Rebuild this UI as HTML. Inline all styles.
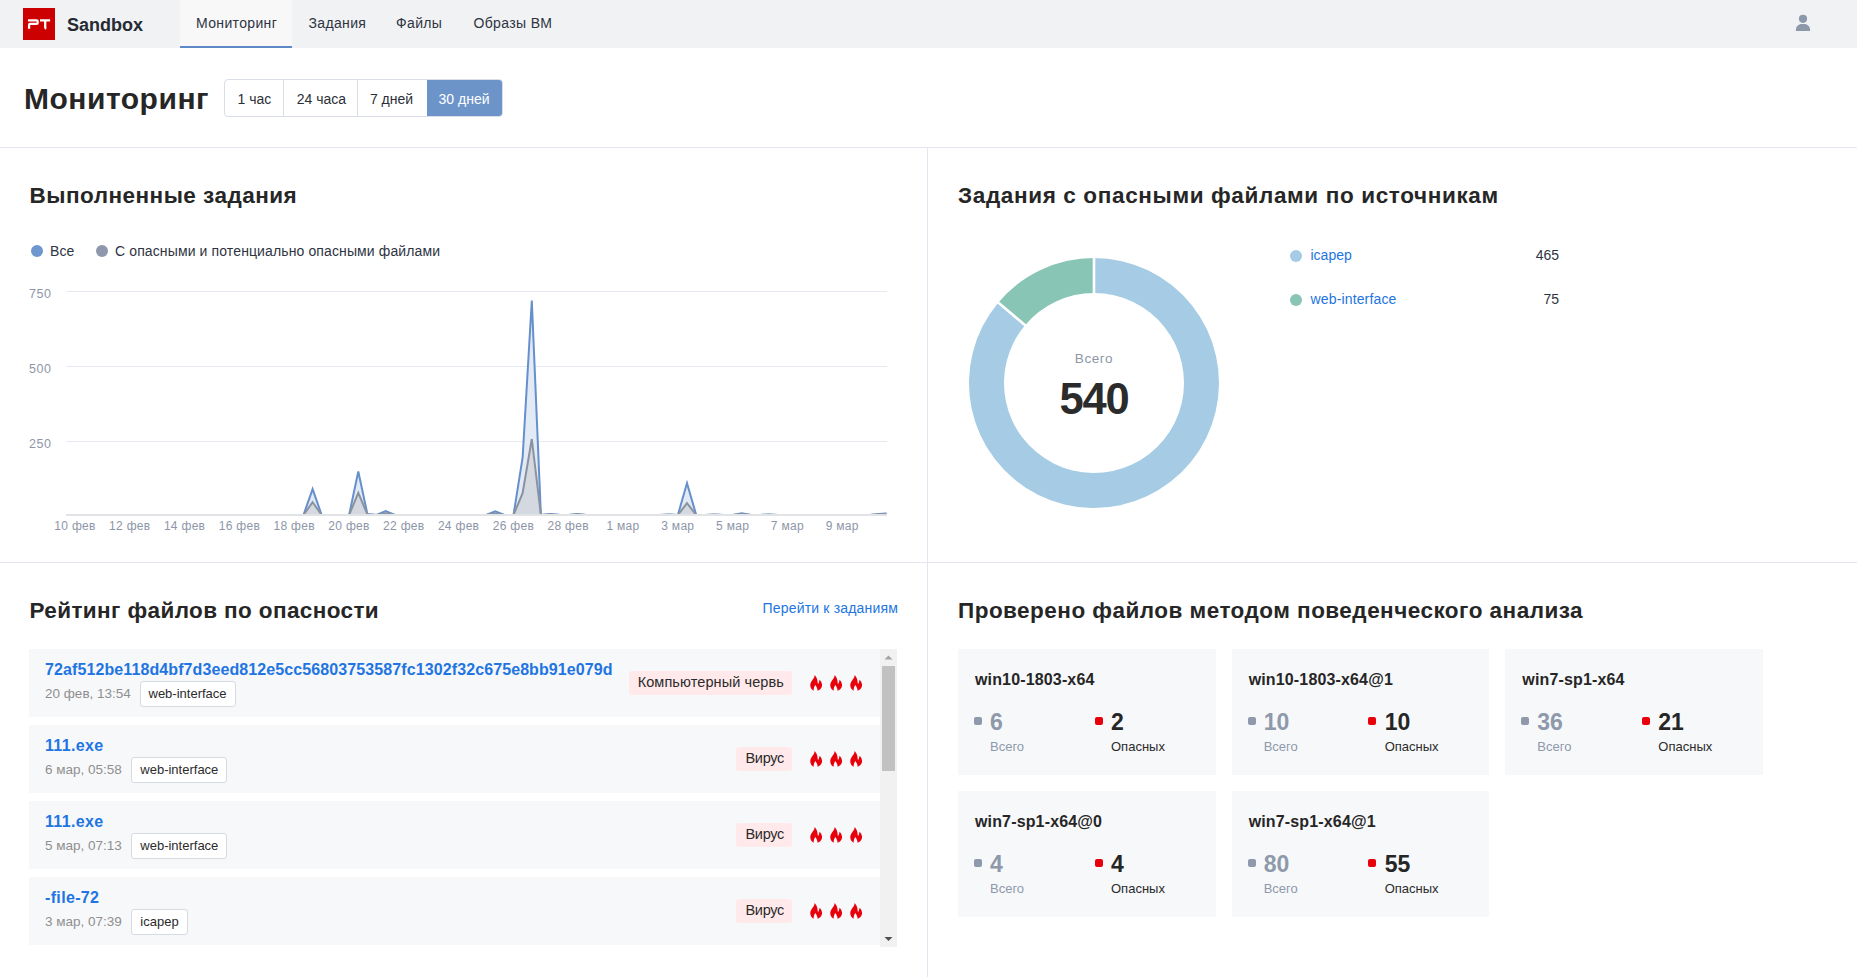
<!DOCTYPE html>
<html><head><meta charset="utf-8">
<style>
*{box-sizing:border-box;margin:0;padding:0}
html,body{width:1857px;height:977px;overflow:hidden;background:#fff}
body{position:relative;font-family:"Liberation Sans",sans-serif;color:#2b2b2b}
.a{position:absolute;white-space:nowrap;line-height:1}
.hdr{position:absolute;left:0;top:0;width:1857px;height:48px;background:#f1f2f4}
.logo{position:absolute;left:23px;top:8px;width:32px;height:32px;background:#cc0000}
.tab{position:absolute;top:0;height:48px}
.tab.act{background:#f8f8f9;border-bottom:2px solid #5f88c8}
.nav{font-size:14px;color:#2e3442;letter-spacing:0.35px}
.btns{position:absolute;left:224px;top:79px;width:278.5px;height:37.8px;border:1px solid #d8dde8;border-radius:4px;overflow:hidden;background:#fff}
.btn{position:absolute;top:0;height:36px;font-size:14px;line-height:39px;text-align:center;color:#2b2f38}
.bsep{position:absolute;top:0;width:1px;height:36px;background:#d8dde8}
.hline{position:absolute;left:0;width:1857px;height:1px;background:#e3e6ee}
.vline{position:absolute;left:927px;top:147px;width:1px;height:830px;background:#e3e6ee}
.h2{font-size:22.5px;font-weight:bold;color:#262626;letter-spacing:0.48px}

.abs{position:absolute}
.axl{font-size:12px;color:#8d96a8;letter-spacing:0.3px}
.lg{font-size:14px;color:#2e3442;letter-spacing:0.12px}
.dot{position:absolute;width:12px;height:12px;border-radius:50%}
.row{position:absolute;left:29px;width:851px;height:68px;background:#f7f8fa}
.fn{position:absolute;left:16px;font-size:16px;font-weight:bold;color:#2175e2;letter-spacing:0.1px;line-height:1;white-space:nowrap}
.dt{position:absolute;left:16px;font-size:13.5px;color:#8f8f8f;line-height:1;white-space:nowrap}
.tag{position:absolute;height:26px;border:1px solid #d6dae2;border-radius:3px;background:#fff;font-size:13px;line-height:23px;padding:0 8px;color:#2b2b2b;white-space:nowrap}
.bdg{position:absolute;right:88px;height:24px;background:#ffe9ea;border-radius:3px;font-size:14.5px;line-height:23px;padding:0 8px 0 9px;letter-spacing:0.1px;color:#2b2b2b;white-space:nowrap}
.fl{position:absolute;width:12.3px;height:15.7px}
.card{position:absolute;width:257.67px;height:126px;background:#f7f8fa}
.ct{position:absolute;left:17px;top:23px;font-size:16px;font-weight:bold;color:#262626;letter-spacing:0.15px;line-height:1;white-space:nowrap}
.sq{position:absolute;top:68px;width:8px;height:8px;border-radius:2px}
.num{position:absolute;top:62.3px;font-size:23px;font-weight:bold;line-height:1;white-space:nowrap}
.lbl{position:absolute;top:91px;font-size:13px;line-height:1;white-space:nowrap}
</style></head><body>
<div class="hdr">
  <div class="logo"><svg width="32" height="32" viewBox="0 0 32 32"><g fill="none" stroke="#fff" stroke-width="2.3" stroke-linecap="butt"><path d="M6.1 13.6V12.3H13.6Q14.7 12.3 14.7 13.4V14.8Q14.7 15.9 13.6 15.9H7.2Q6.1 15.9 6.1 17V20.7"/><path d="M17 12.3H27.1M22.2 12.3V19.3Q22.2 20.3 23.3 20.6"/></g></svg></div>
  <div class="a" style="left:67px;top:15.5px;font-size:18px;font-weight:bold;color:#262a33">Sandbox</div>
  <div class="tab act" style="left:180px;width:112px"></div>
  <div class="a nav" style="left:196px;top:16.2px">Мониторинг</div>
  <div class="a nav" style="left:308.5px;top:16.2px">Задания</div>
  <div class="a nav" style="left:396px;top:16.2px">Файлы</div>
  <div class="a nav" style="left:473.5px;top:16.2px">Образы ВМ</div>
</div>

<div class="a" style="left:24px;top:84px;font-size:30px;font-weight:bold;color:#262626;letter-spacing:0.52px">Мониторинг</div>
<div class="btns">
  <div class="btn" style="left:0;width:59px">1 час</div>
  <div class="bsep" style="left:58px"></div>
  <div class="btn" style="left:60px;width:73px">24 часа</div>
  <div class="bsep" style="left:132px"></div>
  <div class="btn" style="left:132px;width:69px">7 дней</div>
  <div class="btn" style="left:202px;width:77px;background:#6c94c9;color:#fff;padding-right:3px">30 дней</div>
</div>

<div class="hline" style="top:147px"></div>
<div class="hline" style="top:562px"></div>
<div class="vline"></div>

<div class="a h2" style="left:29.5px;top:185px;letter-spacing:0.48px">Выполненные задания</div>
<div class="a h2" style="left:958px;top:184.6px;letter-spacing:0.64px">Задания с опасными файлами по источникам</div>
<div class="a h2" style="left:29.5px;top:599.8px;letter-spacing:0.39px">Рейтинг файлов по опасности</div>
<div class="a h2" style="left:958px;top:599.8px;letter-spacing:0.48px">Проверено файлов методом поведенческого анализа</div>


<svg class="abs" style="left:1795px;top:14px" width="16" height="18" viewBox="0 0 16 18"><circle cx="8" cy="4.8" r="4.1" fill="#8e98ab"/><path d="M0.9 17V15.9C0.9 12.5 3.5 10 6.9 10H9.1C12.5 10 15.1 12.5 15.1 15.9V17Z" fill="#8e98ab"/></svg>

<!-- chart -->
<svg class="abs" style="left:0;top:0" width="927" height="560" viewBox="0 0 927 560">
<g stroke="#e6e9ef" stroke-width="1">
<line x1="66" y1="291.5" x2="887" y2="291.5"/>
<line x1="66" y1="366.5" x2="887" y2="366.5"/>
<line x1="66" y1="441.5" x2="887" y2="441.5"/>
</g>
<path d="M66.0,515.0 L66.0,515.0 L75.1,515.0 L84.3,515.0 L93.4,515.0 L102.5,515.0 L111.7,515.0 L120.8,515.0 L129.9,515.0 L139.1,515.0 L148.2,515.0 L157.3,515.0 L166.5,515.0 L175.6,515.0 L184.7,515.0 L193.9,515.0 L203.0,515.0 L212.1,515.0 L221.3,515.0 L230.4,515.0 L239.5,515.0 L248.7,515.0 L257.8,515.0 L266.9,515.0 L276.1,515.0 L285.2,515.0 L294.3,515.0 L303.5,515.0 L312.6,489.1 L321.7,515.0 L330.9,515.0 L340.0,515.0 L349.1,515.0 L358.3,471.5 L367.4,514.1 L376.5,515.0 L385.7,511.1 L394.8,515.0 L403.9,515.0 L413.1,515.0 L422.2,515.0 L431.3,515.0 L440.5,515.0 L449.6,515.0 L458.7,515.0 L467.9,515.0 L477.0,515.0 L486.1,515.0 L495.3,511.4 L504.4,515.0 L513.5,515.0 L522.6,457.7 L531.8,300.6 L540.9,515.0 L550.0,514.1 L559.2,514.7 L568.3,515.0 L577.4,514.1 L586.6,515.0 L595.7,515.0 L604.8,515.0 L614.0,515.0 L623.1,515.0 L632.2,515.0 L641.4,515.0 L650.5,515.0 L659.6,515.0 L668.8,514.4 L677.9,515.0 L687.0,483.1 L696.2,515.0 L705.3,515.0 L714.4,514.4 L723.6,515.0 L732.7,515.0 L741.8,513.2 L751.0,515.0 L760.1,515.0 L769.2,514.4 L778.4,515.0 L787.5,515.0 L796.6,515.0 L805.8,515.0 L814.9,515.0 L824.0,515.0 L833.2,515.0 L842.3,515.0 L851.4,515.0 L860.6,515.0 L869.7,515.0 L878.8,514.1 L886.5,513.5 L886.5,515.0 Z" fill="#e2eaf5"/>
<path d="M66.0,515.0 L66.0,515.0 L75.1,515.0 L84.3,515.0 L93.4,515.0 L102.5,515.0 L111.7,515.0 L120.8,515.0 L129.9,515.0 L139.1,515.0 L148.2,515.0 L157.3,515.0 L166.5,515.0 L175.6,515.0 L184.7,515.0 L193.9,515.0 L203.0,515.0 L212.1,515.0 L221.3,515.0 L230.4,515.0 L239.5,515.0 L248.7,515.0 L257.8,515.0 L266.9,515.0 L276.1,515.0 L285.2,515.0 L294.3,515.0 L303.5,515.0 L312.6,502.2 L321.7,515.0 L330.9,515.0 L340.0,515.0 L349.1,515.0 L358.3,492.9 L367.4,514.4 L376.5,515.0 L385.7,513.2 L394.8,515.0 L403.9,515.0 L413.1,515.0 L422.2,515.0 L431.3,515.0 L440.5,515.0 L449.6,515.0 L458.7,515.0 L467.9,515.0 L477.0,515.0 L486.1,515.0 L495.3,513.5 L504.4,515.0 L513.5,515.0 L522.6,493.2 L531.8,439.0 L540.9,515.0 L550.0,514.4 L559.2,514.9 L568.3,515.0 L577.4,514.6 L586.6,515.0 L595.7,515.0 L604.8,515.0 L614.0,515.0 L623.1,515.0 L632.2,515.0 L641.4,515.0 L650.5,515.0 L659.6,515.0 L668.8,514.7 L677.9,515.0 L687.0,503.1 L696.2,515.0 L705.3,515.0 L714.4,514.7 L723.6,515.0 L732.7,515.0 L741.8,514.1 L751.0,515.0 L760.1,515.0 L769.2,514.7 L778.4,515.0 L787.5,515.0 L796.6,515.0 L805.8,515.0 L814.9,515.0 L824.0,515.0 L833.2,515.0 L842.3,515.0 L851.4,515.0 L860.6,515.0 L869.7,515.0 L878.8,514.4 L886.5,514.1 L886.5,515.0 Z" fill="#d3d8e1"/>
<polyline points="66.0,515.0 75.1,515.0 84.3,515.0 93.4,515.0 102.5,515.0 111.7,515.0 120.8,515.0 129.9,515.0 139.1,515.0 148.2,515.0 157.3,515.0 166.5,515.0 175.6,515.0 184.7,515.0 193.9,515.0 203.0,515.0 212.1,515.0 221.3,515.0 230.4,515.0 239.5,515.0 248.7,515.0 257.8,515.0 266.9,515.0 276.1,515.0 285.2,515.0 294.3,515.0 303.5,515.0 312.6,489.1 321.7,515.0 330.9,515.0 340.0,515.0 349.1,515.0 358.3,471.5 367.4,514.1 376.5,515.0 385.7,511.1 394.8,515.0 403.9,515.0 413.1,515.0 422.2,515.0 431.3,515.0 440.5,515.0 449.6,515.0 458.7,515.0 467.9,515.0 477.0,515.0 486.1,515.0 495.3,511.4 504.4,515.0 513.5,515.0 522.6,457.7 531.8,300.6 540.9,515.0 550.0,514.1 559.2,514.7 568.3,515.0 577.4,514.1 586.6,515.0 595.7,515.0 604.8,515.0 614.0,515.0 623.1,515.0 632.2,515.0 641.4,515.0 650.5,515.0 659.6,515.0 668.8,514.4 677.9,515.0 687.0,483.1 696.2,515.0 705.3,515.0 714.4,514.4 723.6,515.0 732.7,515.0 741.8,513.2 751.0,515.0 760.1,515.0 769.2,514.4 778.4,515.0 787.5,515.0 796.6,515.0 805.8,515.0 814.9,515.0 824.0,515.0 833.2,515.0 842.3,515.0 851.4,515.0 860.6,515.0 869.7,515.0 878.8,514.1 886.5,513.5" fill="none" stroke="#6690cc" stroke-width="2" stroke-linejoin="miter"/>
<polyline points="66.0,515.0 75.1,515.0 84.3,515.0 93.4,515.0 102.5,515.0 111.7,515.0 120.8,515.0 129.9,515.0 139.1,515.0 148.2,515.0 157.3,515.0 166.5,515.0 175.6,515.0 184.7,515.0 193.9,515.0 203.0,515.0 212.1,515.0 221.3,515.0 230.4,515.0 239.5,515.0 248.7,515.0 257.8,515.0 266.9,515.0 276.1,515.0 285.2,515.0 294.3,515.0 303.5,515.0 312.6,502.2 321.7,515.0 330.9,515.0 340.0,515.0 349.1,515.0 358.3,492.9 367.4,514.4 376.5,515.0 385.7,513.2 394.8,515.0 403.9,515.0 413.1,515.0 422.2,515.0 431.3,515.0 440.5,515.0 449.6,515.0 458.7,515.0 467.9,515.0 477.0,515.0 486.1,515.0 495.3,513.5 504.4,515.0 513.5,515.0 522.6,493.2 531.8,439.0 540.9,515.0 550.0,514.4 559.2,514.9 568.3,515.0 577.4,514.6 586.6,515.0 595.7,515.0 604.8,515.0 614.0,515.0 623.1,515.0 632.2,515.0 641.4,515.0 650.5,515.0 659.6,515.0 668.8,514.7 677.9,515.0 687.0,503.1 696.2,515.0 705.3,515.0 714.4,514.7 723.6,515.0 732.7,515.0 741.8,514.1 751.0,515.0 760.1,515.0 769.2,514.7 778.4,515.0 787.5,515.0 796.6,515.0 805.8,515.0 814.9,515.0 824.0,515.0 833.2,515.0 842.3,515.0 851.4,515.0 860.6,515.0 869.7,515.0 878.8,514.4 886.5,514.1" fill="none" stroke="#8a929e" stroke-width="2" stroke-linejoin="miter"/>
<line x1="66" y1="515" x2="887" y2="515" stroke="#e2e3e7" stroke-width="2"/>
</svg>
<div class="dot" style="left:31px;top:245px;background:#6e97cf"></div>
<div class="a lg" style="left:50px;top:244.2px">Все</div>
<div class="dot" style="left:96px;top:245px;background:#8e97ab"></div>
<div class="a lg" style="left:115px;top:244.2px">С опасными и потенциально опасными файлами</div>
<div class="a axl" style="left:29px;top:287.8px;font-size:12.5px;letter-spacing:0.6px">750</div>
<div class="a axl" style="left:29px;top:362.8px;font-size:12.5px;letter-spacing:0.6px">500</div>
<div class="a axl" style="left:29px;top:437.8px;font-size:12.5px;letter-spacing:0.6px">250</div>
<div class="a axl" style="left:15.0px;width:120px;text-align:center;top:520px">10 фев</div>
<div class="a axl" style="left:69.8px;width:120px;text-align:center;top:520px">12 фев</div>
<div class="a axl" style="left:124.6px;width:120px;text-align:center;top:520px">14 фев</div>
<div class="a axl" style="left:179.4px;width:120px;text-align:center;top:520px">16 фев</div>
<div class="a axl" style="left:234.2px;width:120px;text-align:center;top:520px">18 фев</div>
<div class="a axl" style="left:289.0px;width:120px;text-align:center;top:520px">20 фев</div>
<div class="a axl" style="left:343.8px;width:120px;text-align:center;top:520px">22 фев</div>
<div class="a axl" style="left:398.6px;width:120px;text-align:center;top:520px">24 фев</div>
<div class="a axl" style="left:453.4px;width:120px;text-align:center;top:520px">26 фев</div>
<div class="a axl" style="left:508.2px;width:120px;text-align:center;top:520px">28 фев</div>
<div class="a axl" style="left:563.0px;width:120px;text-align:center;top:520px">1 мар</div>
<div class="a axl" style="left:617.8px;width:120px;text-align:center;top:520px">3 мар</div>
<div class="a axl" style="left:672.6px;width:120px;text-align:center;top:520px">5 мар</div>
<div class="a axl" style="left:727.4px;width:120px;text-align:center;top:520px">7 мар</div>
<div class="a axl" style="left:782.2px;width:120px;text-align:center;top:520px">9 мар</div>

<!-- donut -->
<svg class="abs" style="left:964.4px;top:252.9px" width="260" height="260" viewBox="-130 -130 260 260">
<path d="M0 -125A125 125 0 1 1 -95.76 -80.35L-68.94 -57.85A90 90 0 1 0 0 -90Z" fill="#a5cce4"/>
<path d="M-95.76 -80.35A125 125 0 0 1 0 -125L0 -90A90 90 0 0 0 -68.94 -57.85Z" fill="#88c5b5"/>
<g stroke="#fff" stroke-width="2.6"><line x1="0" y1="-127" x2="0" y2="-88"/><line x1="-97.29" y1="-81.63" x2="-67.41" y2="-56.57"/></g>
</svg>
<div class="a" style="left:994px;width:200px;text-align:center;top:351.5px;font-size:13.5px;color:#8c96a8;letter-spacing:0.6px">Всего</div>
<div class="a" style="left:994px;width:200px;text-align:center;top:377.5px;font-size:43.5px;font-weight:bold;color:#2b2b2b;letter-spacing:-1.2px">540</div>
<div class="dot" style="left:1290px;top:250px;background:#a5cce4"></div>
<div class="a" style="left:1310.5px;top:247.8px;font-size:14px;color:#2175e2">icapep</div>
<div class="a" style="left:1459px;width:100px;text-align:right;top:247.8px;font-size:14px;color:#2e3442">465</div>
<div class="dot" style="left:1290px;top:294px;background:#88c5b5"></div>
<div class="a" style="left:1310.5px;top:291.7px;font-size:14px;color:#2175e2;letter-spacing:0.15px">web-interface</div>
<div class="a" style="left:1459px;width:100px;text-align:right;top:291.7px;font-size:14px;color:#2e3442">75</div>

<div class="a" style="left:762.5px;top:600.9px;font-size:14px;color:#2175e2;letter-spacing:0.18px">Перейти к заданиям</div>

<!-- list -->
<div class="row" style="top:649px"><div class="fn" style="top:13px">72af512be118d4bf7d3eed812e5cc56803753587fc1302f32c675e8bb91e079d</div><div class="dt" style="top:38.1px">20 фев, 13:54</div><div class="tag" style="left:110.5px;top:32.4px">web-interface</div><div class="bdg" style="top:22.3px">Компьютерный червь</div><svg class="fl" style="left:781.0px;top:26px" viewBox="0 0 12 16"><path fill="#e8000b" d="M4.5 0C5.8 1.8 7 3.2 7.3 5.8C7.5 7.3 7.6 8.4 7.9 9.4C8.7 8.3 9.3 6.5 9.4 4.8C11 6 12 8.2 12 10.3C12 13.3 9.8 15.4 7.5 16C7.5 14 6.4 11.5 5.1 10.1C4 11.6 3.4 13.8 3.4 16C1.4 15.2 0 13 0 10.5C0 6 4.3 4.2 4.5 0Z"/></svg><svg class="fl" style="left:801.0px;top:26px" viewBox="0 0 12 16"><path fill="#e8000b" d="M4.5 0C5.8 1.8 7 3.2 7.3 5.8C7.5 7.3 7.6 8.4 7.9 9.4C8.7 8.3 9.3 6.5 9.4 4.8C11 6 12 8.2 12 10.3C12 13.3 9.8 15.4 7.5 16C7.5 14 6.4 11.5 5.1 10.1C4 11.6 3.4 13.8 3.4 16C1.4 15.2 0 13 0 10.5C0 6 4.3 4.2 4.5 0Z"/></svg><svg class="fl" style="left:821.0px;top:26px" viewBox="0 0 12 16"><path fill="#e8000b" d="M4.5 0C5.8 1.8 7 3.2 7.3 5.8C7.5 7.3 7.6 8.4 7.9 9.4C8.7 8.3 9.3 6.5 9.4 4.8C11 6 12 8.2 12 10.3C12 13.3 9.8 15.4 7.5 16C7.5 14 6.4 11.5 5.1 10.1C4 11.6 3.4 13.8 3.4 16C1.4 15.2 0 13 0 10.5C0 6 4.3 4.2 4.5 0Z"/></svg></div>
<div class="row" style="top:725px"><div class="fn" style="top:13px;letter-spacing:0.35px">111.exe</div><div class="dt" style="top:38.1px">6 мар, 05:58</div><div class="tag" style="left:102.3px;top:32.4px">web-interface</div><div class="bdg" style="top:22.3px;letter-spacing:-0.3px">Вирус</div><svg class="fl" style="left:781.0px;top:26px" viewBox="0 0 12 16"><path fill="#e8000b" d="M4.5 0C5.8 1.8 7 3.2 7.3 5.8C7.5 7.3 7.6 8.4 7.9 9.4C8.7 8.3 9.3 6.5 9.4 4.8C11 6 12 8.2 12 10.3C12 13.3 9.8 15.4 7.5 16C7.5 14 6.4 11.5 5.1 10.1C4 11.6 3.4 13.8 3.4 16C1.4 15.2 0 13 0 10.5C0 6 4.3 4.2 4.5 0Z"/></svg><svg class="fl" style="left:801.0px;top:26px" viewBox="0 0 12 16"><path fill="#e8000b" d="M4.5 0C5.8 1.8 7 3.2 7.3 5.8C7.5 7.3 7.6 8.4 7.9 9.4C8.7 8.3 9.3 6.5 9.4 4.8C11 6 12 8.2 12 10.3C12 13.3 9.8 15.4 7.5 16C7.5 14 6.4 11.5 5.1 10.1C4 11.6 3.4 13.8 3.4 16C1.4 15.2 0 13 0 10.5C0 6 4.3 4.2 4.5 0Z"/></svg><svg class="fl" style="left:821.0px;top:26px" viewBox="0 0 12 16"><path fill="#e8000b" d="M4.5 0C5.8 1.8 7 3.2 7.3 5.8C7.5 7.3 7.6 8.4 7.9 9.4C8.7 8.3 9.3 6.5 9.4 4.8C11 6 12 8.2 12 10.3C12 13.3 9.8 15.4 7.5 16C7.5 14 6.4 11.5 5.1 10.1C4 11.6 3.4 13.8 3.4 16C1.4 15.2 0 13 0 10.5C0 6 4.3 4.2 4.5 0Z"/></svg></div>
<div class="row" style="top:801px"><div class="fn" style="top:13px;letter-spacing:0.35px">111.exe</div><div class="dt" style="top:38.1px">5 мар, 07:13</div><div class="tag" style="left:102.3px;top:32.4px">web-interface</div><div class="bdg" style="top:22.3px;letter-spacing:-0.3px">Вирус</div><svg class="fl" style="left:781.0px;top:26px" viewBox="0 0 12 16"><path fill="#e8000b" d="M4.5 0C5.8 1.8 7 3.2 7.3 5.8C7.5 7.3 7.6 8.4 7.9 9.4C8.7 8.3 9.3 6.5 9.4 4.8C11 6 12 8.2 12 10.3C12 13.3 9.8 15.4 7.5 16C7.5 14 6.4 11.5 5.1 10.1C4 11.6 3.4 13.8 3.4 16C1.4 15.2 0 13 0 10.5C0 6 4.3 4.2 4.5 0Z"/></svg><svg class="fl" style="left:801.0px;top:26px" viewBox="0 0 12 16"><path fill="#e8000b" d="M4.5 0C5.8 1.8 7 3.2 7.3 5.8C7.5 7.3 7.6 8.4 7.9 9.4C8.7 8.3 9.3 6.5 9.4 4.8C11 6 12 8.2 12 10.3C12 13.3 9.8 15.4 7.5 16C7.5 14 6.4 11.5 5.1 10.1C4 11.6 3.4 13.8 3.4 16C1.4 15.2 0 13 0 10.5C0 6 4.3 4.2 4.5 0Z"/></svg><svg class="fl" style="left:821.0px;top:26px" viewBox="0 0 12 16"><path fill="#e8000b" d="M4.5 0C5.8 1.8 7 3.2 7.3 5.8C7.5 7.3 7.6 8.4 7.9 9.4C8.7 8.3 9.3 6.5 9.4 4.8C11 6 12 8.2 12 10.3C12 13.3 9.8 15.4 7.5 16C7.5 14 6.4 11.5 5.1 10.1C4 11.6 3.4 13.8 3.4 16C1.4 15.2 0 13 0 10.5C0 6 4.3 4.2 4.5 0Z"/></svg></div>
<div class="row" style="top:877px"><div class="fn" style="top:13px;letter-spacing:0.35px">-file-72</div><div class="dt" style="top:38.1px">3 мар, 07:39</div><div class="tag" style="left:102.3px;top:32.4px">icapep</div><div class="bdg" style="top:22.3px;letter-spacing:-0.3px">Вирус</div><svg class="fl" style="left:781.0px;top:26px" viewBox="0 0 12 16"><path fill="#e8000b" d="M4.5 0C5.8 1.8 7 3.2 7.3 5.8C7.5 7.3 7.6 8.4 7.9 9.4C8.7 8.3 9.3 6.5 9.4 4.8C11 6 12 8.2 12 10.3C12 13.3 9.8 15.4 7.5 16C7.5 14 6.4 11.5 5.1 10.1C4 11.6 3.4 13.8 3.4 16C1.4 15.2 0 13 0 10.5C0 6 4.3 4.2 4.5 0Z"/></svg><svg class="fl" style="left:801.0px;top:26px" viewBox="0 0 12 16"><path fill="#e8000b" d="M4.5 0C5.8 1.8 7 3.2 7.3 5.8C7.5 7.3 7.6 8.4 7.9 9.4C8.7 8.3 9.3 6.5 9.4 4.8C11 6 12 8.2 12 10.3C12 13.3 9.8 15.4 7.5 16C7.5 14 6.4 11.5 5.1 10.1C4 11.6 3.4 13.8 3.4 16C1.4 15.2 0 13 0 10.5C0 6 4.3 4.2 4.5 0Z"/></svg><svg class="fl" style="left:821.0px;top:26px" viewBox="0 0 12 16"><path fill="#e8000b" d="M4.5 0C5.8 1.8 7 3.2 7.3 5.8C7.5 7.3 7.6 8.4 7.9 9.4C8.7 8.3 9.3 6.5 9.4 4.8C11 6 12 8.2 12 10.3C12 13.3 9.8 15.4 7.5 16C7.5 14 6.4 11.5 5.1 10.1C4 11.6 3.4 13.8 3.4 16C1.4 15.2 0 13 0 10.5C0 6 4.3 4.2 4.5 0Z"/></svg></div>

<div class="abs" style="left:880px;top:649px;width:17px;height:298px;background:#f1f1f1"></div>
<div class="abs" style="left:882px;top:666px;width:13px;height:105px;background:#c1c1c1"></div>
<svg class="abs" style="left:880px;top:649px" width="17" height="298"><path d="M4.5 10.5L8.5 6.5L12.5 10.5Z" fill="#a3a3a3"/><path d="M4.5 288L8.5 292L12.5 288Z" fill="#505050"/></svg>

<!-- cards -->
<div class="card" style="left:958px;top:649px"><div class="ct">win10-1803-x64</div><div class="sq" style="left:16px;background:#8e99ab"></div><div class="num" style="left:32px;color:#8e99ab">6</div><div class="lbl" style="left:32px;color:#8e99ab">Всего</div><div class="sq" style="left:136.7px;background:#e8000b"></div><div class="num" style="left:153px;color:#262626">2</div><div class="lbl" style="left:153px;color:#2b2b2b">Опасных</div></div>
<div class="card" style="left:1231.67px;top:649px"><div class="ct">win10-1803-x64@1</div><div class="sq" style="left:16px;background:#8e99ab"></div><div class="num" style="left:32px;color:#8e99ab">10</div><div class="lbl" style="left:32px;color:#8e99ab">Всего</div><div class="sq" style="left:136.7px;background:#e8000b"></div><div class="num" style="left:153px;color:#262626">10</div><div class="lbl" style="left:153px;color:#2b2b2b">Опасных</div></div>
<div class="card" style="left:1505.33px;top:649px"><div class="ct">win7-sp1-x64</div><div class="sq" style="left:16px;background:#8e99ab"></div><div class="num" style="left:32px;color:#8e99ab">36</div><div class="lbl" style="left:32px;color:#8e99ab">Всего</div><div class="sq" style="left:136.7px;background:#e8000b"></div><div class="num" style="left:153px;color:#262626">21</div><div class="lbl" style="left:153px;color:#2b2b2b">Опасных</div></div>
<div class="card" style="left:958px;top:791px"><div class="ct">win7-sp1-x64@0</div><div class="sq" style="left:16px;background:#8e99ab"></div><div class="num" style="left:32px;color:#8e99ab">4</div><div class="lbl" style="left:32px;color:#8e99ab">Всего</div><div class="sq" style="left:136.7px;background:#e8000b"></div><div class="num" style="left:153px;color:#262626">4</div><div class="lbl" style="left:153px;color:#2b2b2b">Опасных</div></div>
<div class="card" style="left:1231.67px;top:791px"><div class="ct">win7-sp1-x64@1</div><div class="sq" style="left:16px;background:#8e99ab"></div><div class="num" style="left:32px;color:#8e99ab">80</div><div class="lbl" style="left:32px;color:#8e99ab">Всего</div><div class="sq" style="left:136.7px;background:#e8000b"></div><div class="num" style="left:153px;color:#262626">55</div><div class="lbl" style="left:153px;color:#2b2b2b">Опасных</div></div>
</body></html>
